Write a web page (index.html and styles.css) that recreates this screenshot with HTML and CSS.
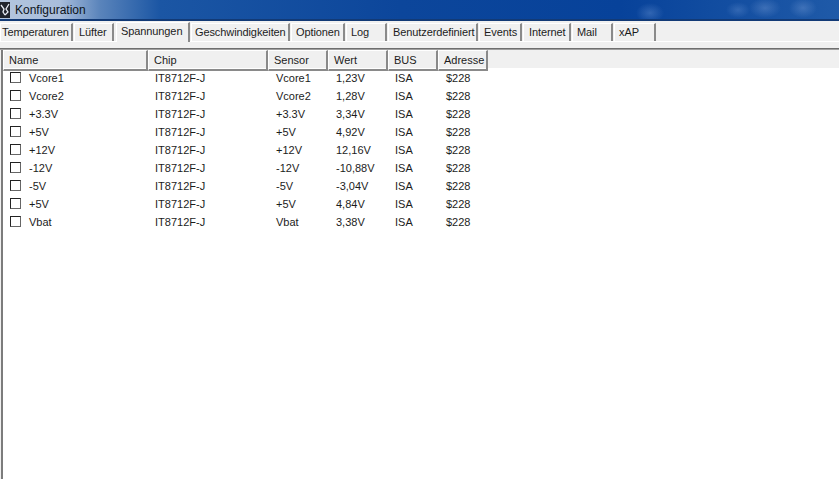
FILE: index.html
```html
<!DOCTYPE html>
<html lang="de">
<head>
<meta charset="utf-8">
<title>Konfiguration</title>
<link rel="stylesheet" href="styles.css">
</head>
<body>
<div class="window">
  <header class="titlebar">
    <svg class="appicon" width="10" height="16" viewBox="0 0 10 16"><rect width="10" height="16" fill="#20242c"/><path d="M1 3l3 4-1 3 2 3M9 2L6 7l2 3-3 3" fill="none" stroke="#e8ecf4" stroke-width="1.3"/></svg>
    <span class="title">Konfiguration</span>
  </header>
  <nav class="tabs">
    <div class="tab t1">Temperaturen</div>
    <div class="tab t2">Lüfter</div>
    <div class="tab active t3">Spannungen</div>
    <div class="tab t4">Geschwindigkeiten</div>
    <div class="tab t5">Optionen</div>
    <div class="tab t6">Log</div>
    <div class="tab t7">Benutzerdefiniert</div>
    <div class="tab t8">Events</div>
    <div class="tab t9">Internet</div>
    <div class="tab t10">Mail</div>
    <div class="tab t11">xAP</div>
  </nav>
  <div class="tabgap"></div>
  <main class="list">
    <div class="row head">
      <div class="hc">Name</div><div class="hc">Chip</div><div class="hc">Sensor</div><div class="hc">Wert</div><div class="hc">BUS</div><div class="hc">Adresse</div>
    </div>
    <div class="row"><div class="name"><i class="cb"></i>Vcore1</div><div class="narrow">IT8712F-J</div><div>Vcore1</div><div>1,23V</div><div class="narrow">ISA</div><div>$228</div></div>
    <div class="row"><div class="name"><i class="cb"></i>Vcore2</div><div class="narrow">IT8712F-J</div><div>Vcore2</div><div>1,28V</div><div class="narrow">ISA</div><div>$228</div></div>
    <div class="row"><div class="name"><i class="cb"></i>+3.3V</div><div class="narrow">IT8712F-J</div><div>+3.3V</div><div>3,34V</div><div class="narrow">ISA</div><div>$228</div></div>
    <div class="row"><div class="name"><i class="cb"></i>+5V</div><div class="narrow">IT8712F-J</div><div>+5V</div><div>4,92V</div><div class="narrow">ISA</div><div>$228</div></div>
    <div class="row"><div class="name"><i class="cb"></i>+12V</div><div class="narrow">IT8712F-J</div><div>+12V</div><div>12,16V</div><div class="narrow">ISA</div><div>$228</div></div>
    <div class="row"><div class="name"><i class="cb"></i>-12V</div><div class="narrow">IT8712F-J</div><div>-12V</div><div>-10,88V</div><div class="narrow">ISA</div><div>$228</div></div>
    <div class="row"><div class="name"><i class="cb"></i>-5V</div><div class="narrow">IT8712F-J</div><div>-5V</div><div>-3,04V</div><div class="narrow">ISA</div><div>$228</div></div>
    <div class="row"><div class="name"><i class="cb"></i>+5V</div><div class="narrow">IT8712F-J</div><div>+5V</div><div>4,84V</div><div class="narrow">ISA</div><div>$228</div></div>
    <div class="row"><div class="name"><i class="cb"></i>Vbat</div><div class="narrow">IT8712F-J</div><div>Vbat</div><div>3,38V</div><div class="narrow">ISA</div><div>$228</div></div>
  </main>
</div>
</body>
</html>
```
FILE: styles.css
```css
* { box-sizing: border-box; }
html, body { margin: 0; height: 100%; overflow: hidden; }
body { font: 11px/16px "Liberation Sans", Arial, sans-serif; color: #1c1c1c; background: #f0f0f0; }
.window { display: flex; flex-direction: column; height: 479px; }

.titlebar {
  height: 21px; display: flex; align-items: center; gap: 4px; flex: none;
  border-bottom: 2px solid #123a76;
  background:
    radial-gradient(ellipse 14px 10px at 650px 13px, rgba(120,160,220,.35), transparent),
    radial-gradient(ellipse 12px 8px at 738px 10px, rgba(120,160,220,.3), transparent),
    radial-gradient(ellipse 16px 10px at 765px 8px, rgba(130,165,220,.35), transparent),
    radial-gradient(ellipse 14px 10px at 803px 8px, rgba(130,165,220,.35), transparent),
    linear-gradient(90deg, #b4c6de 0, #a8bddb 60px, #5a84bb 100px, #1b56a4 160px, #0c469b 400px, #07429a 620px, #1f5aa8 839px);
}
.appicon { flex: none; }
.title { font-size: 12px; color: #0d1420; margin-left: 1px; }

.tabs { height: 21px; background: #f0f0f0; display: flex; align-items: flex-end; flex: none; border-bottom: 1px solid #fff; }
.tab {
  height: 18px; padding-left: 1px; background: #f0f0f0; letter-spacing: -0.1px;
  border-top: 1px solid #fff; border-left: 1px solid #fff;
  border-right: 2px solid #8a8a8a; line-height: 17px; margin-right: 1px; flex: none; white-space: nowrap;
}
.tab.active { height: 20px; padding-left: 4px; line-height: 17px; margin-bottom: -1px; z-index: 1; margin-left: 1px; }
.t1 { width: 73px; }
.t2 { width: 40px; padding-left: 4px; }
.t3 { width: 74px; }
.t4 { width: 99px; padding-left: 3px; }
.t5 { width: 54px; padding-left: 4px; }
.t6 { width: 41px; padding-left: 4px; }
.t7 { width: 90px; padding-left: 4px; }
.t8 { width: 43px; padding-left: 4px; }
.t9 { width: 48px; padding-left: 5px; }
.t10 { width: 41px; padding-left: 4px; }
.t11 { width: 42px; padding-left: 4px; }

.tabgap { height: 7px; background: #f0f0f0; flex: none; border-bottom: 1px solid #6f6f6f; box-shadow: 0 1px 0 #a0a0a0; position: relative; }

.list { flex: 1; background: #fff; border-left: 2px solid #7c7c7c; margin-left: 1px; padding-top: 1px; }
.row { display: grid; grid-template-columns: 145px 120px 60px 60px 50px 50px; height: 18px; line-height: 18px; }
.row > div { padding-left: 8px; white-space: nowrap; }
.row > .narrow { padding-left: 7px; }
.row.head { background: #f0f0f0; margin-bottom: 1px; }
.row > .hc {
  padding-left: 5px; line-height: 18px; border-top: 1px solid #fff; border-left: 1px solid #fff;
  border-right: 2px solid #8a8a8a; border-bottom: 2px solid #8a8a8a;
}
.row > .name { padding-left: 7px; display: flex; align-items: center; gap: 8px; }
.cb { width: 11px; height: 11px; border: 1px solid #666; border-top-color: #222; border-left-color: #222; background: #fff; flex: none; position: relative; top: -1px; }
```
